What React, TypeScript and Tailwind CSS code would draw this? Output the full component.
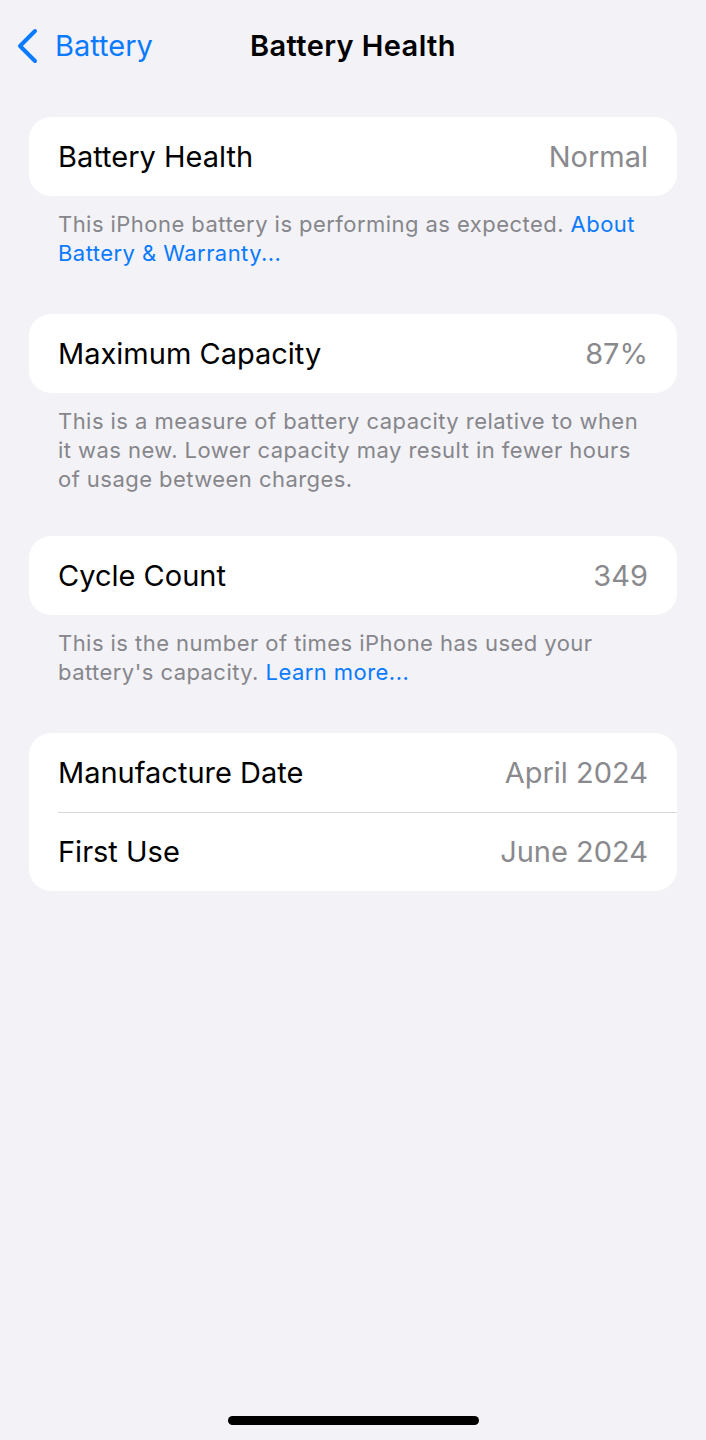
import React from "react";

const font = { fontFamily: 'Inter, "Noto Sans", "Liberation Sans", sans-serif' };

function Row({ label, value }: { label: string; value: string }) {
  return (
    <div className="flex h-[79px] items-center justify-between pl-[29px] pr-[29px]">
      <span className="text-[29px] text-black">{label}</span>
      <span className="text-[29px] text-[#8a8a8e]">{value}</span>
    </div>
  );
}

function Footer({ children }: { children: React.ReactNode }) {
  return (
    <div className="px-[29px] pt-[14px] text-[22px] leading-[29px] text-[#86868b] tracking-[0.45px]">
      {children}
    </div>
  );
}

export default function App() {
  return (
    <div className="relative min-h-[1440px] w-full bg-[#f2f2f7]" style={font}>
      <div className="relative flex h-[92px] items-center">
        <div className="flex items-center pl-[16px]">
          <svg width="24" height="36" viewBox="0 0 24 36" fill="none">
            <path d="M19 3 L4 18 L19 33" stroke="#0a7aff" strokeWidth="4" strokeLinecap="round" strokeLinejoin="round" />
          </svg>
          <span className="ml-[15px] text-[29px] text-[#0a7aff]">Battery</span>
        </div>
        <div className="absolute left-0 right-0 top-0 flex h-[92px] items-center justify-center pointer-events-none">
          <span className="text-[29px] font-semibold tracking-[0.4px] text-black">Battery Health</span>
        </div>
      </div>

      <div className="mx-[29px] mt-[25px]">
        <div className="rounded-[22px] bg-white">
          <Row label="Battery Health" value="Normal" />
        </div>
        <Footer>
          This iPhone battery is performing as expected. <span className="text-[#0a7aff]">About</span>
          <br />
          <span className="text-[#0a7aff]">Battery &amp; Warranty...</span>
        </Footer>

        <div className="mt-[46px] rounded-[22px] bg-white">
          <Row label="Maximum Capacity" value="87%" />
        </div>
        <Footer>
          This is a measure of battery capacity relative to when
          <br />
          it was new. Lower capacity may result in fewer hours
          <br />
          of usage between charges.
        </Footer>

        <div className="mt-[42px] rounded-[22px] bg-white">
          <Row label="Cycle Count" value="349" />
        </div>
        <Footer>
          This is the number of times iPhone has used your
          <br />
          battery's capacity. <span className="text-[#0a7aff]">Learn more...</span>
        </Footer>

        <div className="mt-[46px] rounded-[22px] bg-white">
          <Row label="Manufacture Date" value="April 2024" />
          <div className="ml-[29px] h-px bg-[#d8d8dc]" />
          <div className="-mt-px">
            <Row label="First Use" value="June 2024" />
          </div>
        </div>
      </div>

      <div className="absolute bottom-[15px] left-0 right-0 flex justify-center">
        <div className="h-[9px] w-[251px] rounded-full bg-black" />
      </div>
    </div>
  );
}
